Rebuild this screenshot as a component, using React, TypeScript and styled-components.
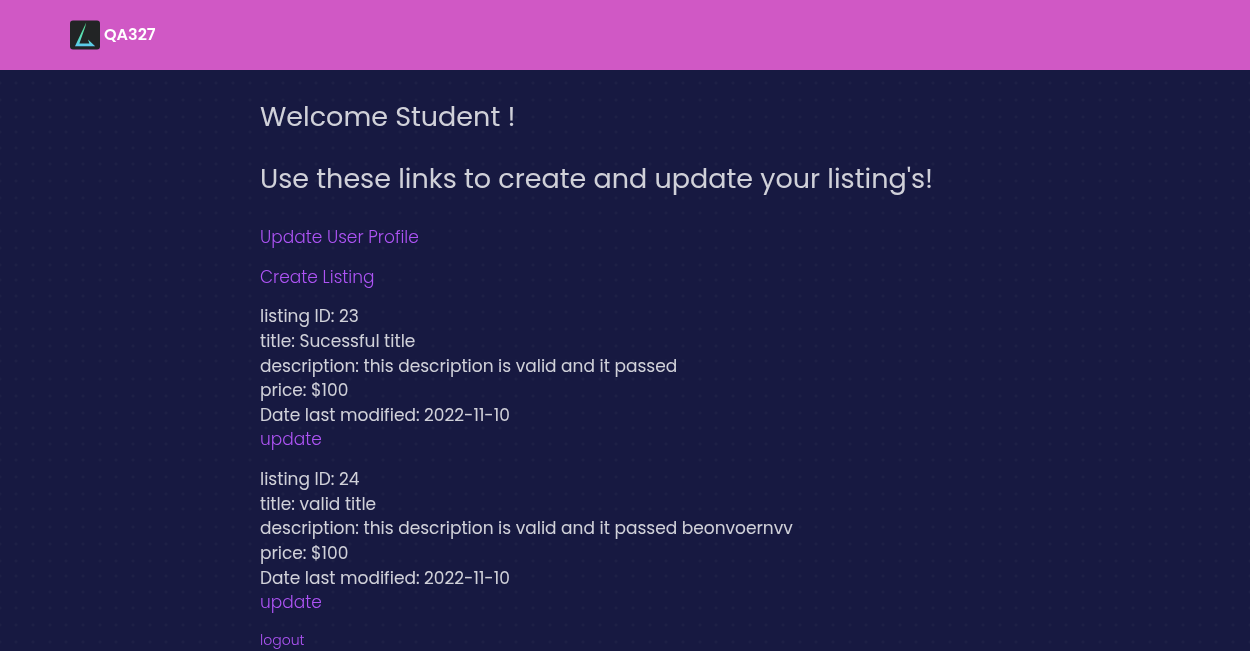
import React from "react";
import styled, { createGlobalStyle } from "styled-components";

const dotColumns = [8, 24, 41];
const dotRows = [13, 30, 47, 62, 78, 94, 111, 128, 143];
const dots = dotRows
  .flatMap((y) =>
    dotColumns.map((x) => `radial-gradient(circle at ${x}px ${y}px, #202247 0, #1d1f45 1px, transparent 2px)`)
  )
  .join(", ");

const GlobalStyle = createGlobalStyle`
  *, *::before, *::after { box-sizing: border-box; }
  body {
    margin: 0;
    background: #171941;
    color: rgba(255, 255, 255, 0.8);
    font-family: Poppins, Inter, sans-serif;
    font-size: 17px;
    line-height: 1.45;
    -webkit-font-smoothing: antialiased;
  }
`;

const Page = styled.div`
  display: flex;
  flex-direction: column;
  min-height: 100vh;
`;

const NavBar = styled.header`
  height: 70px;
  padding: 0 70px;
  display: flex;
  align-items: center;
  background: #d058c5;
`;

const Brand = styled.a`
  display: flex;
  align-items: center;
  gap: 4px;
  color: #fff;
  font-size: 16px;
  font-weight: 600;
  text-decoration: none;
  will-change: transform;
`;

const Logo = styled.svg`
  width: 30px;
  height: 30px;
  display: block;
`;

const Main = styled.main`
  flex: 1;
  padding: 31px 20px 0;
  background-color: #171941;
  background-image: ${dots};
  background-position: -8px 0;
  background-size: 50px 148px;
`;

const Content = styled.div`
  max-width: 730px;
  margin: 0 auto;
  will-change: transform;
`;

const Heading = styled.h1`
  margin: 0 0 30px;
  font-size: 27px;
  font-weight: 400;
  line-height: 32px;
`;

const Paragraph = styled.p<{ $small?: boolean }>`
  margin: 0 0 15px;
  font-size: ${({ $small }) => ($small ? "14px" : "inherit")};

  &:last-child {
    margin-bottom: 0;
  }
`;

const Link = styled.a`
  color: #ae54f5;
  font-weight: 300;
  text-decoration: none;
`;

const Listing = styled.article`
  margin-bottom: 15px;
`;

const Line = styled.div``;

const listings = [
  {
    id: 23,
    title: "Sucessful title",
    description: "this description is valid and it passed",
    price: 100,
    modified: "2022-11-10",
  },
  {
    id: 24,
    title: "valid title",
    description: "this description is valid and it passed beonvoernvv",
    price: 100,
    modified: "2022-11-10",
  },
];

export default function App() {
  return (
    <Page>
      <GlobalStyle />
      <NavBar>
        <Brand href="#">
          <Logo viewBox="0 0 30 30" aria-hidden="true">
            <defs>
              <linearGradient id="mark" x1="0" y1="0" x2="0" y2="1">
                <stop offset="0" stopColor="#58d98f" />
                <stop offset="0.6" stopColor="#5ae0b8" />
                <stop offset="1" stopColor="#5cc8f0" />
              </linearGradient>
            </defs>
            <rect y="0.5" width="30" height="29" rx="3" fill="#222425" />
            <path
              d="M16.2 2.6 L5 26.2 H25.2 L18 19.6 L19.4 23.4 H9.4 L15.2 7 Z"
              fill="url(#mark)"
            />
          </Logo>
          QA327
        </Brand>
      </NavBar>
      <Main>
        <Content>
          <Heading>Welcome Student !</Heading>
          <Heading as="h2">Use these links to create and update your listing's!</Heading>
          <Paragraph>
            <Link href="#profile">Update User Profile</Link>
          </Paragraph>
          <Paragraph>
            <Link href="#create">Create Listing</Link>
          </Paragraph>
          {listings.map((item) => (
            <Listing key={item.id}>
              <Line>listing ID: {item.id}</Line>
              <Line>title: {item.title}</Line>
              <Line>description: {item.description}</Line>
              <Line>price: ${item.price}</Line>
              <Line>Date last modified: {item.modified}</Line>
              <Line>
                <Link href={`#update-${item.id}`}>update</Link>
              </Line>
            </Listing>
          ))}
          <Paragraph $small>
            <Link href="#logout">logout</Link>
          </Paragraph>
        </Content>
      </Main>
    </Page>
  );
}
